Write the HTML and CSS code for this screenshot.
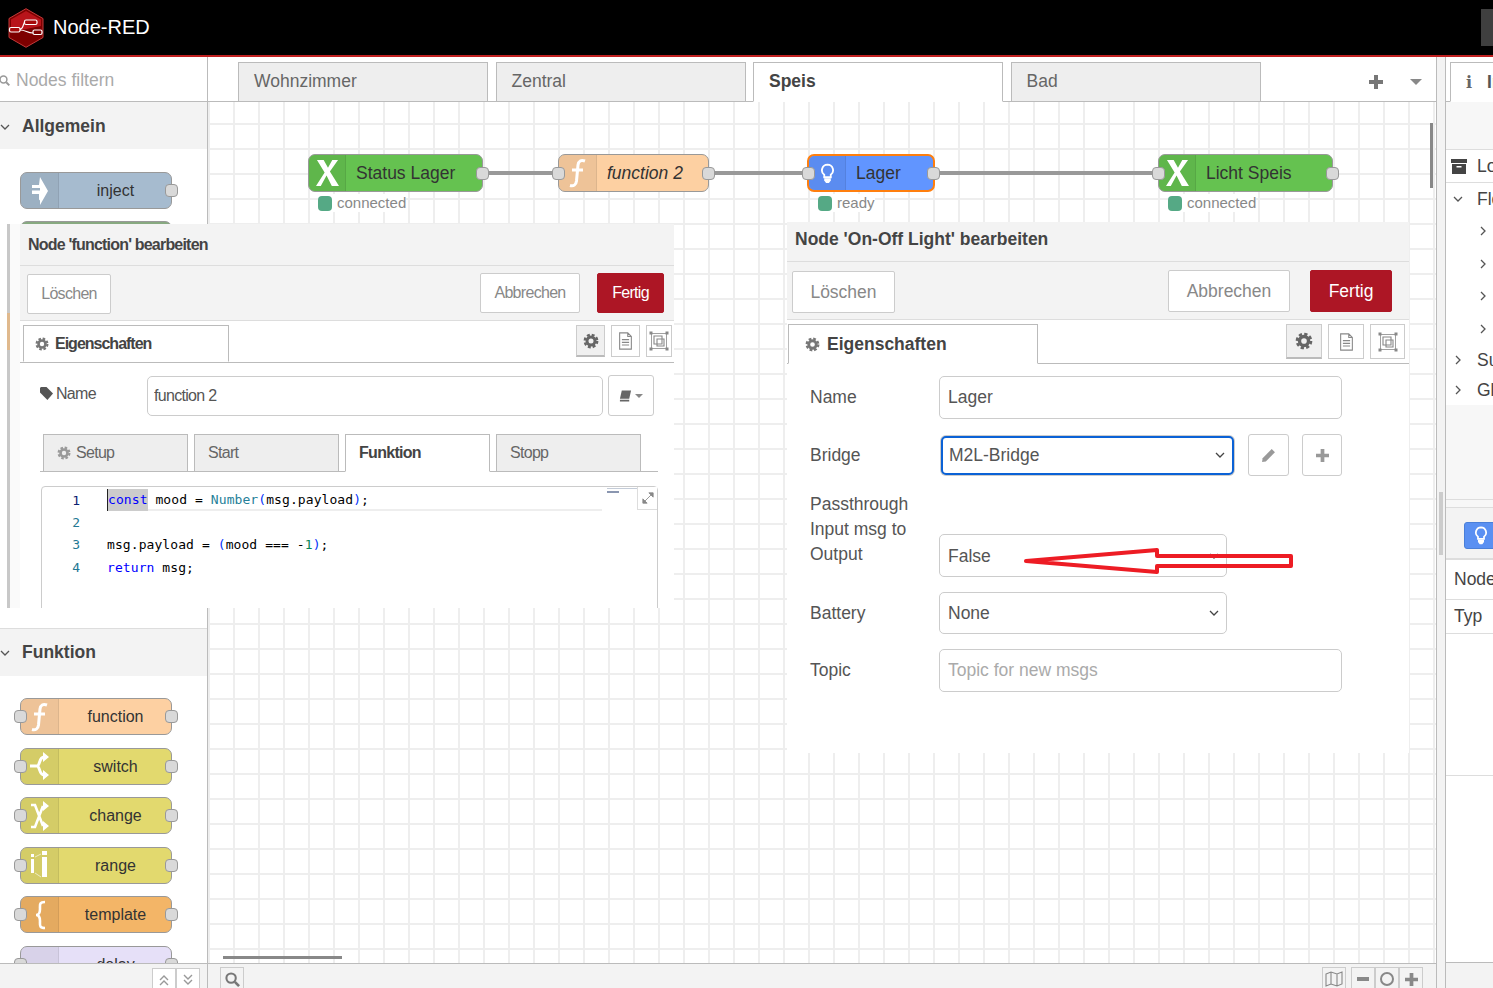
FILE: index.html
```html
<!DOCTYPE html>
<html lang="de">
<head>
    <meta charset="UTF-8">
    <title>Node-RED</title>
    <link rel="stylesheet" href="styles.css">
</head>
<body>
    <!-- shared icons -->
    <svg class="icon-defs" width="0" height="0">
        <defs>
            <symbol id="i-x" viewBox="0 0 24 27"><path d="M1 0h7l4.500 8L17 0h6l-8.500 12L24 27h-7.500L11 16 5 27H0l9-14z" fill="#fff"/></symbol>
            <symbol id="i-func" viewBox="0 0 20 30"><path d="M17 3c-4-1.500-6.500 0-7 4L8.500 23c-.5 4-3 5.500-6.500 4.500M4 12h11" fill="none" stroke="#fff" stroke-width="3"/></symbol>
            <symbol id="i-bulb" viewBox="0 0 16 22"><path d="M8 1.500a6 6 0 0 0-3.500 10.800V15h7v-2.700A6 6 0 0 0 8 1.500z" fill="none" stroke="#fff" stroke-width="2"/><path d="M4.500 16h7v2.500L9.500 21h-3l-2-2.500z" fill="#fff"/></symbol>
            <symbol id="i-inject" viewBox="0 0 20 30"><path d="M10 1l8 14-8 14v-5.500l-1 1V18H2v-3.500h8V12H2V9h7z" fill="#fff"/></symbol>
            <symbol id="i-switch" viewBox="0 0 20 30"><path d="M0 15h7c3 0 2-9 7-9M7 15c3 0 2 9 7 9" fill="none" stroke="#fff" stroke-width="3"/><path d="M13 1l6 5-6 5zM13 19l6 5-6 5z" fill="#fff"/></symbol>
            <symbol id="i-change" viewBox="0 0 20 30"><path d="M1 4h4l8 21M1 26h4l8-21" fill="none" stroke="#fff" stroke-width="2.600"/><path d="M13 0l6 5-6 5zM13 20l6 5-6 5z" fill="#fff"/></symbol>
            <symbol id="i-range" viewBox="0 0 20 30"><path d="M1 9h3v14H1zM12 7h5v20h-5zM12 1h5v4h-5zM1 4h3v3H1z" fill="#fff"/><path d="M5 7l6-3M5 23l6 4" stroke="#fff" stroke-width=".6"/></symbol>
            <symbol id="i-brace" viewBox="0 0 16 30"><path d="M13 2c-6 0-5 3-5 7 0 4-1 6-4 6 3 0 4 2 4 6 0 4-1 7 5 7" fill="none" stroke="#fff" stroke-width="2.600"/></symbol>
            <symbol id="i-gear" viewBox="0 0 16 16"><circle cx="8" cy="8" r="4" fill="none" stroke="currentColor" stroke-width="3"/><circle cx="8" cy="8" r="6.200" fill="none" stroke="currentColor" stroke-width="2.400" stroke-dasharray="2.900 1.970"/></symbol>
            <symbol id="i-doc" viewBox="0 0 16 20"><path d="M1.500 1h9l4 4v14h-13zM10.500 1v4h4M4 8.500h8M4 11.500h8M4 14.500h8" fill="none" stroke="currentColor" stroke-width="1.200"/></symbol>
            <symbol id="i-frame" viewBox="0 0 20 20"><path d="M2.500 2.500h15v15h-15z" fill="none" stroke="currentColor" stroke-width=".8"/><path d="M5 5h8v8H5zM8 8h7v7H8z" fill="none" stroke="currentColor" stroke-width="1.100"/><path d="M.5.5h3v3h-3zM16.500.5h3v3h-3zM.5 16.500h3v3h-3zM16.500 16.500h3v3h-3z" fill="currentColor"/></symbol>
            <symbol id="i-plus" viewBox="0 0 14 14"><path d="M5 0h4v5h5v4H9v5H5V9H0V5h5z" fill="currentColor"/></symbol>
            <symbol id="i-search" viewBox="0 0 16 16"><circle cx="6.500" cy="6.500" r="5" fill="none" stroke="currentColor" stroke-width="2.200"/><path d="M10.500 10.500L15 15" stroke="currentColor" stroke-width="2.800"/></symbol>
            <symbol id="i-down" viewBox="0 0 10 6"><path d="M1 1l4 4 4-4" fill="none" stroke="currentColor" stroke-width="1.300"/></symbol>
            <symbol id="i-right" viewBox="0 0 6 10"><path d="M1 1l4 4-4 4" fill="none" stroke="currentColor" stroke-width="1.300"/></symbol>
            <symbol id="i-dbl-up" viewBox="0 0 12 12"><path d="M2 6l4-4 4 4M2 11l4-4 4 4" fill="none" stroke="currentColor" stroke-width="1.400"/></symbol>
            <symbol id="i-dbl-down" viewBox="0 0 12 12"><path d="M2 1l4 4 4-4M2 6l4 4 4-4" fill="none" stroke="currentColor" stroke-width="1.400"/></symbol>
        </defs>
    </svg>

    <header class="topbar">
        <svg class="logo" viewBox="0 0 36 40" width="36" height="40">
            <path d="M18 .700l17 9.800v19L18 39.300 1 29.500v-19z" fill="#7d0000" stroke="#c43a3a" stroke-width="1"/>
            <path d="M18 3l15 8.600V18L3 24V11.600z" fill="#b8141a"/>
            <path d="M12 21c4 0 3-7 5-7M12 22c6 0 7 3 13 3" fill="none" stroke="#fff" stroke-width="1.200"/>
            <rect x="16.500" y="12" width="12.500" height="4.500" rx="1.500" fill="#a50a0a" stroke="#fff" stroke-width="1.200"/>
            <rect x="1.500" y="19.500" width="10.500" height="4.500" rx="1.500" fill="#a50a0a" stroke="#fff" stroke-width="1.200"/>
            <rect x="25" y="22" width="9" height="4.500" rx="1.500" fill="#7d0000" stroke="#fff" stroke-width="1.200"/>
        </svg>
        <span class="brand">Node-RED</span>
        <div class="deploy-stub"></div>
    </header>

    <div class="main">
        <aside class="palette">
            <div class="filter">
                <svg class="filter-icon"><use href="#i-search"/></svg>
                <span>Nodes filtern</span>
            </div>
            <div class="cat-head cat-head-first">
                <svg class="chev-down"><use href="#i-down"/></svg>Allgemein
            </div>
            <div class="cat-body cat-general">
                <div class="node node-inject">
                    <div class="node-icon"><svg class="ico"><use href="#i-inject"/></svg></div>
                    <span class="node-label">inject</span>
                    <span class="port port-r"></span>
                </div>
                <div class="node node-debug"></div>
            </div>
            <div class="cat-head">
                <svg class="chev-down"><use href="#i-down"/></svg>Funktion
            </div>
            <div class="cat-body cat-func">
                <div class="node node-function">
                    <div class="node-icon"><svg class="ico"><use href="#i-func"/></svg></div>
                    <span class="node-label">function</span>
                    <span class="port port-l"></span><span class="port port-r"></span>
                </div>
                <div class="node node-yellow">
                    <div class="node-icon"><svg class="ico"><use href="#i-switch"/></svg></div>
                    <span class="node-label">switch</span>
                    <span class="port port-l"></span><span class="port port-r"></span>
                </div>
                <div class="node node-yellow">
                    <div class="node-icon"><svg class="ico"><use href="#i-change"/></svg></div>
                    <span class="node-label">change</span>
                    <span class="port port-l"></span><span class="port port-r"></span>
                </div>
                <div class="node node-yellow">
                    <div class="node-icon"><svg class="ico"><use href="#i-range"/></svg></div>
                    <span class="node-label">range</span>
                    <span class="port port-l"></span><span class="port port-r"></span>
                </div>
                <div class="node node-template">
                    <div class="node-icon"><svg class="ico"><use href="#i-brace"/></svg></div>
                    <span class="node-label">template</span>
                    <span class="port port-l"></span><span class="port port-r"></span>
                </div>
                <div class="node node-delay">
                    <div class="node-icon"></div>
                    <span class="node-label">delay</span>
                    <span class="port port-l"></span><span class="port port-r"></span>
                </div>
            </div>
            <div class="palette-foot">
                <span class="foot-btn foot-chev"><svg><use href="#i-dbl-up"/></svg></span>
                <span class="foot-btn foot-chev"><svg><use href="#i-dbl-down"/></svg></span>
            </div>
        </aside>

        <section class="workspace">
            <div class="tabs">
                <div class="tab">Wohnzimmer</div>
                <div class="tab">Zentral</div>
                <div class="tab tab-active">Speis</div>
                <div class="tab">Bad</div>
                <svg class="tabs-plus"><use href="#i-plus"/></svg>
                <span class="tabs-caret"></span>
            </div>
            <div class="canvas">
                <div class="wire wire-a"></div>
                <div class="wire wire-b"></div>
                <div class="wire wire-c"></div>

                <div class="node flow-node node-green n-status">
                    <div class="node-icon"><svg class="ico ico-x"><use href="#i-x"/></svg></div>
                    <span class="node-label">Status Lager</span>
                    <span class="port port-r"></span>
                </div>
                <div class="status s-status"><i></i>connected</div>

                <div class="node flow-node node-function n-func">
                    <div class="node-icon"><svg class="ico"><use href="#i-func"/></svg></div>
                    <span class="node-label label-italic">function 2</span>
                    <span class="port port-l"></span><span class="port port-r"></span>
                </div>

                <div class="node flow-node node-blue n-lager">
                    <div class="node-icon"><svg class="ico ico-bulb"><use href="#i-bulb"/></svg></div>
                    <span class="node-label">Lager</span>
                    <span class="port port-l"></span><span class="port port-r"></span>
                </div>
                <div class="status s-lager"><i></i>ready</div>

                <div class="node flow-node node-green n-licht">
                    <div class="node-icon"><svg class="ico ico-x"><use href="#i-x"/></svg></div>
                    <span class="node-label">Licht Speis</span>
                    <span class="port port-l"></span><span class="port port-r"></span>
                </div>
                <div class="status s-licht"><i></i>connected</div>

                <div class="scroll-v"></div>
                <div class="scroll-h"></div>
            </div>
            <div class="ws-foot">
                <span class="foot-btn btn-search"><svg><use href="#i-search"/></svg></span>
                <div class="zoom-group">
                    <span class="foot-btn btn-map">
                        <svg viewBox="0 0 18 16"><path d="M1 3l5-2 6 2 5-2v12l-5 2-6-2-5 2zM6 1v12M12 3v12" fill="none" stroke="currentColor" stroke-width="1.100"/></svg>
                    </span>
                    <div class="zoom-btns">
                        <span class="foot-btn"><i class="z-minus"></i></span>
                        <span class="foot-btn"><i class="z-circle"></i></span>
                        <span class="foot-btn"><svg class="z-plus"><use href="#i-plus"/></svg></span>
                    </div>
                </div>
            </div>
        </section>

        <div class="separator"><div class="sep-thumb"></div></div>

        <aside class="sidebar">
            <div class="side-tabs">
                <div class="side-tab"><b class="info-i">i</b><span>Info</span></div>
            </div>
            <div class="side-tools"></div>
            <div class="side-row">
                <svg class="archive" viewBox="0 0 16 15"><path d="M0 0h16v4H0zM1 5h14v10H1z" fill="#444"/><path d="M5.500 7h5v1.500h-5z" fill="#fff"/></svg>
                <span>Lokal</span>
            </div>
            <div class="side-tree">
                <div class="tree-row tree-top"><svg class="chev-down"><use href="#i-down"/></svg><span>Flows</span></div>
                <div class="tree-row tree-sub"><svg class="chev-right"><use href="#i-right"/></svg></div>
                <div class="tree-row tree-sub"><svg class="chev-right"><use href="#i-right"/></svg></div>
                <div class="tree-row tree-sub"><svg class="chev-right"><use href="#i-right"/></svg></div>
                <div class="tree-row tree-sub"><svg class="chev-right"><use href="#i-right"/></svg></div>
                <div class="tree-row"><svg class="chev-right"><use href="#i-right"/></svg><span>Subflows</span></div>
                <div class="tree-row"><svg class="chev-right"><use href="#i-right"/></svg><span>Global</span></div>
            </div>
            <div class="side-gutter"></div>
            <div class="side-gutter-2"></div>
            <div class="side-node">
                <span class="side-node-btn"><svg class="ico-bulb-sm"><use href="#i-bulb"/></svg></span>
            </div>
            <div class="side-prop"><span>Node</span></div>
            <div class="side-prop side-prop-2"><span>Typ</span></div>
            <div class="side-blank"></div>
            <div class="side-foot"></div>
        </aside>
    </div>

    <!-- left edit tray -->
    <div class="strip"><div class="strip-node"></div></div>
    <div class="tray tray-left">
        <div class="tray-head">Node 'function' bearbeiten</div>
        <div class="tray-bar">
            <span class="btn">Löschen</span>
            <span class="btn btn-cancel">Abbrechen</span>
            <span class="btn btn-done">Fertig</span>
        </div>
        <div class="tray-tabs">
            <div class="tray-tab"><svg class="gear"><use href="#i-gear"/></svg>Eigenschaften</div>
            <div class="tray-tools">
                <span class="tool tool-on"><svg class="tool-gear"><use href="#i-gear"/></svg></span>
                <span class="tool"><svg class="tool-doc"><use href="#i-doc"/></svg></span>
                <span class="tool"><svg class="tool-frame"><use href="#i-frame"/></svg></span>
            </div>
        </div>
        <div class="left-body">
            <div class="left-name">
                <label class="left-label">
                    <svg class="tag" viewBox="0 0 14 14"><path d="M0 1l1-1h6l7 7-6 7-8-8z" fill="#555"/></svg>Name
                </label>
                <input class="field left-input" type="text" value="function 2">
                <span class="lib-btn">
                    <svg viewBox="0 0 14 12" class="book"><path d="M3 0h10l-2 9H1zM1 10h10v2H1z" fill="#666"/></svg>
                    <i class="caret"></i>
                </span>
            </div>
            <div class="sub-tabs">
                <div class="sub-tab"><svg class="gear gear-light"><use href="#i-gear"/></svg>Setup</div>
                <div class="sub-tab">Start</div>
                <div class="sub-tab sub-tab-on">Funktion</div>
                <div class="sub-tab">Stopp</div>
            </div>
            <div class="code">
                <div class="code-line code-active"><span class="ln ln-on">1</span><code><span class="sel"><span class="kw">const</span></span> mood = <span class="fn">Number</span><span class="br">(</span>msg.payload<span class="br">)</span>;</code></div>
                <div class="code-line"><span class="ln">2</span><code></code></div>
                <div class="code-line"><span class="ln">3</span><code>msg.payload = <span class="br">(</span>mood === -<span class="num">1</span><span class="br">)</span>;</code></div>
                <div class="code-line"><span class="ln">4</span><code><span class="kw">return</span> msg;</code></div>
                <div class="minimap"><i></i><i></i></div>
                <span class="expand">
                    <svg viewBox="0 0 14 14"><path d="M8 1h5v5zM1 8v5h5zM11 3L3 11" fill="#888" stroke="#888"/></svg>
                </span>
            </div>
        </div>
    </div>

    <!-- right edit tray -->
    <div class="tray tray-right">
        <div class="tray-head">Node 'On-Off Light' bearbeiten</div>
        <div class="tray-bar">
            <span class="btn">Löschen</span>
            <span class="btn btn-cancel">Abbrechen</span>
            <span class="btn btn-done">Fertig</span>
        </div>
        <div class="tray-tabs">
            <div class="tray-tab"><svg class="gear"><use href="#i-gear"/></svg>Eigenschaften</div>
            <div class="tray-tools">
                <span class="tool tool-on"><svg class="tool-gear"><use href="#i-gear"/></svg></span>
                <span class="tool"><svg class="tool-doc"><use href="#i-doc"/></svg></span>
                <span class="tool"><svg class="tool-frame"><use href="#i-frame"/></svg></span>
            </div>
        </div>
        <div class="form">
            <div class="form-row">
                <label>Name</label>
                <input class="field field-wide" type="text" value="Lager">
            </div>
            <div class="form-row">
                <label>Bridge</label>
                <select class="field field-bridge"><option>M2L-Bridge</option></select>
                <span class="side-btn side-btn-edit">
                    <svg viewBox="0 0 14 14"><path d="M10 1l3 3-8.500 8.500L1 13l.5-3.500z" fill="#999"/></svg>
                </span>
                <span class="side-btn side-btn-add"><svg><use href="#i-plus"/></svg></span>
            </div>
            <div class="form-row form-row-tall">
                <label>Passthrough Input msg to Output</label>
                <select class="field field-mid field-false"><option>False</option></select>
            </div>
            <div class="form-row">
                <label>Battery</label>
                <select class="field field-mid"><option>None</option></select>
            </div>
            <div class="form-row">
                <label>Topic</label>
                <input class="field field-wide" type="text" placeholder="Topic for new msgs">
            </div>
        </div>
    </div>

    <!-- hand drawn arrow on the screenshot -->
    <svg class="red-arrow" viewBox="0 0 272 28" width="272" height="28">
        <path d="M3 14L134 3v6h134v10H134v6z" fill="none" stroke="#ed1c24" stroke-width="4" stroke-linejoin="round"/>
    </svg>
</body>
</html>
```

FILE: styles.css
```css
* {
    box-sizing: border-box;
}

html, body {
    margin: 0;
    height: 100%;
    overflow: hidden;
}

body {
    display: flex;
    flex-direction: column;
    font-family: "Liberation Sans", Arial, sans-serif;
    font-size: 17.500px;
    color: #555;
    background: #fff;
}

.icon-defs {
    position: absolute;
}

/* top bar */
.topbar {
    height: 57px;
    flex: none;
    display: flex;
    align-items: center;
    padding-left: 8px;
    background: #000;
    border-bottom: 2px solid #c02020;
    position: relative;
}

.logo {
    flex: none;
}

.brand {
    margin-left: 9px;
    font-size: 20px;
    color: #fff;
}

.deploy-stub {
    position: absolute;
    right: 0;
    top: 9px;
    width: 12px;
    height: 37px;
    background: #3f3f3f;
}

.main {
    flex: 1;
    display: flex;
    min-height: 0;
}

/* palette */
.palette {
    width: 208px;
    flex: none;
    display: flex;
    flex-direction: column;
    border-right: 1px solid #bbb;
    overflow: hidden;
}

.filter {
    height: 45px;
    flex: none;
    display: flex;
    align-items: center;
    gap: 6px;
    padding-top: 3px;
    color: #aaa;
    border-bottom: 1px solid #bbb;
}

.filter-icon {
    width: 11px;
    height: 11px;
    margin-left: -1px;
    color: #999;
}

.cat-head {
    height: 47px;
    flex: none;
    display: flex;
    align-items: center;
    font-weight: bold;
    color: #444;
    background: #f3f3f3;
}

.cat-head-first {
    padding-top: 2px;
}

.chev-down {
    width: 10px;
    height: 6px;
    flex: none;
    margin: 0 12px 0 0;
    color: #555;
}

.chev-right {
    width: 6px;
    height: 10px;
    flex: none;
    color: #555;
}

.cat-body {
    flex: none;
    display: flex;
    flex-direction: column;
    align-items: flex-start;
}

.cat-general {
    height: 480px;
    padding: 23px 0 0 20px;
    gap: 12px;
    border-bottom: 1px solid #ddd;
}

.cat-func {
    flex: 1;
    min-height: 0;
    padding: 22px 0 0 20px;
    gap: 12.600px;
}

/* nodes */
.node {
    width: 152px;
    height: 37px;
    flex: none;
    display: flex;
    align-items: stretch;
    position: relative;
    border: 1px solid #999;
    border-radius: 7px;
    font-size: 16px;
    color: #333;
}

.node-icon {
    width: 38px;
    flex: none;
    display: flex;
    align-items: center;
    justify-content: center;
    background: rgba(0, 0, 0, 0.06);
    border-right: 1px solid rgba(0, 0, 0, 0.08);
    border-radius: 6px 0 0 6px;
}

.node-label {
    flex: 1;
    align-self: center;
    text-align: center;
    padding: 1px 0 0 1px;
}

.ico {
    width: 20px;
    height: 30px;
}

.port {
    position: absolute;
    top: 50%;
    width: 13px;
    height: 13px;
    margin-top: -6.500px;
    background: #d9d9d9;
    border: 1px solid #999;
    border-radius: 4px;
}

.port-l {
    left: -7px;
}

.port-r {
    right: -7px;
}

.node-inject { background: #a6bbcf; }
.node-debug { background: #87a980; }
.node-function { background: #fdd0a2; }
.node-yellow { background: #e2d96e; }
.node-template { background: #f3b567; }
.node-delay { background: #e6e0f8; }
.node-green { background: #65c250; }
.node-blue { background: #6195ff; }

/* workspace */
.workspace {
    width: 1229px;
    flex: none;
    display: flex;
    flex-direction: column;
    border-right: 1px solid #bbb;
}

.tabs {
    height: 45px;
    flex: none;
    display: flex;
    align-items: flex-end;
    gap: 7.500px;
    padding-left: 30px;
    border-bottom: 1px solid #bbb;
}

.tab {
    width: 250px;
    height: 40px;
    margin-bottom: -1px;
    padding: 8px 15px 0;
    background: #eee;
    color: #666;
    border: 1px solid #bbb;
}

.tab-active {
    background: #fff;
    color: #444;
    font-weight: bold;
    border-bottom-color: #fff;
}

.tabs-plus {
    width: 14px;
    height: 14px;
    margin: 0 0 12px 101px;
    color: #777;
}

.tabs-caret {
    width: 0;
    height: 0;
    margin: 0 0 16px 19px;
    border-left: 6px solid transparent;
    border-right: 6px solid transparent;
    border-top: 6px solid #888;
}

.canvas {
    flex: 1;
    position: relative;
    overflow: hidden;
    background-color: #fff;
    background-image: linear-gradient(#eee 2px, transparent 2px), linear-gradient(90deg, #eee 2px, transparent 2px);
    background-size: 25px 25px;
    background-position: 25px 21px;
}

/* canvas items, placed by flow coordinates */
.flow-node {
    position: absolute;
    top: 52px;
    height: 38px;
    font-size: 17.500px;
}

.flow-node .node-label {
    text-align: left;
    padding: 0 0 0 10px;
}

.label-italic {
    font-style: italic;
}

.n-status { left: 100px; width: 175px; }
.n-func { left: 350px; width: 151px; }
.n-lager {
    left: 599px;
    width: 128px;
    border: 2px solid #ff7f0e;
}
.n-licht { left: 950px; width: 175px; }

.n-status .node-icon,
.n-licht .node-icon,
.n-lager .node-icon {
    width: 37px;
}

.ico-x {
    width: 23px;
    height: 26px;
}

.ico-bulb {
    width: 15px;
    height: 21px;
}

.wire {
    position: absolute;
    top: 69px;
    height: 4px;
    background: #999;
}

.wire-a { left: 275px; width: 76px; }
.wire-b { left: 500px; width: 100px; }
.wire-c { left: 726px; width: 225px; }

.status {
    position: absolute;
    top: 92px;
    display: flex;
    align-items: center;
    gap: 5px;
    font-size: 15px;
    line-height: 18px;
    color: #888;
    background: #fff;
}

.status i {
    width: 14px;
    height: 15px;
    background: #55a985;
    border-radius: 4px;
}

.s-status { left: 110px; }
.s-lager { left: 610px; }
.s-licht { left: 960px; }

.scroll-v {
    position: absolute;
    right: 3px;
    top: 21px;
    width: 3px;
    height: 65px;
    background: #888;
}

.scroll-h {
    position: absolute;
    left: 15px;
    bottom: 4px;
    width: 119px;
    height: 3px;
    background: #888;
}

.ws-foot {
    height: 25px;
    flex: none;
    display: flex;
    justify-content: space-between;
    padding: 3px 13px 0 12px;
    background: #f3f3f3;
    border-top: 1px solid #bbb;
}

.palette-foot {
    height: 25px;
    flex: none;
    display: flex;
    justify-content: flex-end;
    padding: 4px 7px 0 0;
    background: #f3f3f3;
    border-top: 1px solid #bbb;
    position: relative;
    z-index: 1;
    margin-top: -25px;
}

.foot-btn {
    width: 24px;
    height: 24px;
    display: flex;
    align-items: center;
    justify-content: center;
    color: #888;
    background: #fff;
    border: 1px solid #ccc;
}

.foot-btn svg {
    width: 15px;
    height: 15px;
}

.foot-chev {
    color: #999;
}

.foot-chev svg {
    width: 12px;
    height: 12px;
}

.btn-search {
    color: #777;
    background: #f3f3f3;
}

.btn-map {
    background: #f3f3f3;
}

.btn-map svg {
    width: 18px;
    height: 16px;
}

.zoom-group {
    display: flex;
    gap: 5px;
}

.zoom-btns {
    display: flex;
}

.zoom-btns .foot-btn {
    background: #f3f3f3;
}

.z-minus {
    width: 12px;
    height: 4px;
    background: #888;
}

.z-circle {
    width: 14px;
    height: 14px;
    border: 2px solid #888;
    border-radius: 50%;
}

.foot-btn .z-plus {
    width: 13px;
    height: 13px;
}

/* separator and sidebar */
.separator {
    width: 9px;
    flex: none;
    position: relative;
    background: #f3f3f3;
    border-right: 1px solid #bbb;
}

.sep-thumb {
    position: absolute;
    left: 2px;
    top: 435px;
    width: 4px;
    height: 63px;
    background: #ccc;
}

.sidebar {
    flex: 1;
    min-width: 0;
    display: flex;
    flex-direction: column;
    overflow: hidden;
    color: #444;
    white-space: nowrap;
}

.side-tabs {
    height: 45px;
    flex: none;
    display: flex;
    align-items: flex-end;
    padding-left: 4px;
    border-bottom: 1px solid #bbb;
}

.side-tab {
    width: 120px;
    height: 40px;
    flex: none;
    display: flex;
    align-items: center;
    gap: 15px;
    margin-bottom: -1px;
    padding-left: 15px;
    background: #fff;
    border: 1px solid #bbb;
    border-bottom-color: #fff;
    color: #555;
    font-weight: bold;
}

.info-i {
    font-family: "DejaVu Serif", serif;
    font-size: 16px;
    color: #666;
}

.side-tools {
    height: 48px;
    flex: none;
    background: #f7f7f7;
    border-bottom: 1px solid #ddd;
}

.side-row {
    height: 33px;
    flex: none;
    display: flex;
    align-items: center;
    gap: 10px;
    padding: 1px 0 0 5px;
    border-bottom: 1px solid #ddd;
}

.archive {
    width: 16px;
    height: 15px;
    flex: none;
}

.side-tree {
    height: 222px;
    flex: none;
    display: flex;
    flex-direction: column;
}

.tree-row {
    height: 30px;
    flex: none;
    display: flex;
    align-items: center;
    padding-left: 7px;
}

.tree-top {
    height: 32px;
}

.tree-row .chev-down {
    margin-right: 14px;
}

.tree-row .chev-right {
    margin: 0 16px 0 2px;
}

.tree-sub {
    height: 32.500px;
    padding-left: 32px;
}

.side-gutter {
    height: 95px;
    flex: none;
    background: #f7f7f7;
    border-bottom: 1px solid #ddd;
}

.side-gutter-2 {
    height: 8px;
    flex: none;
    background: #f7f7f7;
    border-bottom: 1px solid #ddd;
}

.side-node {
    height: 52px;
    flex: none;
    padding: 14px 0 0 18px;
    background: #f3f3f3;
    border-bottom: 2px solid #ddd;
}

.side-node-btn {
    width: 60px;
    height: 27px;
    display: flex;
    align-items: center;
    padding-left: 9px;
    background: #5a90f2;
    border: 1px solid #4a7fd8;
    border-radius: 3px;
}

.ico-bulb-sm {
    width: 14px;
    height: 19px;
}

.side-prop {
    height: 40px;
    flex: none;
    display: flex;
    align-items: center;
    padding-left: 8px;
    border-bottom: 1px solid #ddd;
}

.side-prop-2 {
    height: 34px;
}

.side-blank {
    height: 142px;
    flex: none;
    border-bottom: 1px solid #ddd;
}

.side-foot {
    flex: 1;
    position: relative;
}

.side-foot::after {
    content: "";
    position: absolute;
    left: 0;
    right: 0;
    bottom: 0;
    height: 25px;
    background: #f3f3f3;
    border-top: 1px solid #bbb;
}

/* edit trays are pasted over the editor */
.strip {
    position: absolute;
    left: 7px;
    top: 224px;
    width: 13px;
    height: 384px;
    background: #fafafa;
    border-left: 3px solid #c8c8c8;
}

.strip-node {
    width: 3px;
    height: 37px;
    margin: 89px 0 0 -3px;
    background: #e0b98d;
}

.tray {
    position: absolute;
    display: flex;
    flex-direction: column;
    background: #fff;
    overflow: hidden;
}

.tray-head {
    flex: none;
    display: flex;
    align-items: center;
    background: #f3f3f3;
    color: #444;
    font-weight: bold;
    border-bottom: 1px solid #ddd;
}

.tray-bar {
    flex: none;
    display: flex;
    align-items: flex-start;
    background: #f3f3f3;
    border-bottom: 1px solid #ddd;
}

.btn {
    display: flex;
    align-items: center;
    justify-content: center;
    color: #888;
    background: #fff;
    border: 1px solid #ccc;
    border-radius: 2px;
}

.btn-cancel {
    margin-left: auto;
}

.btn-done {
    color: #fff;
    background: #ad1625;
    border-color: #ad1625;
}

.tray-tabs {
    flex: none;
    display: flex;
    align-items: flex-start;
    border-bottom: 1px solid #bbb;
}

.tray-tab {
    display: flex;
    align-items: center;
    margin-bottom: -1px;
    background: #fff;
    color: #444;
    font-weight: bold;
    border: 1px solid #bbb;
    border-bottom-color: #fff;
}

.gear {
    width: 14px;
    height: 14px;
    flex: none;
    color: #777;
}

.gear-light {
    color: #999;
}

.tray-tools {
    margin-left: auto;
    display: flex;
}

.tool {
    display: flex;
    align-items: center;
    justify-content: center;
    color: #888;
    background: #fff;
    border: 1px solid #ccc;
}

.tool-on {
    color: #666;
    background: #f0f0f0;
    border-bottom: 2px solid #bbb;
}

.tool-doc {
    width: 15px;
    height: 18px;
}

.tool-frame {
    width: 20px;
    height: 20px;
}

.field {
    display: block;
    font: inherit;
    color: #555;
    background: #fff;
    border: 1px solid #ccc;
    border-radius: 5px;
    padding: 0 8px;
    outline: none;
}

select.field {
    appearance: none;
    background-image: url("data:image/svg+xml,%3Csvg xmlns='http://www.w3.org/2000/svg' width='10' height='6'%3E%3Cpath d='M1 1l4 4 4-4' fill='none' stroke='%23444' stroke-width='1.300'/%3E%3C/svg%3E");
    background-repeat: no-repeat;
    background-position: right 7px center;
}

.field::placeholder {
    color: #aaa;
}

/* left tray */
.tray-left {
    left: 20px;
    top: 224px;
    width: 654px;
    height: 384px;
    font-size: 16px;
    letter-spacing: -0.700px;
}

.tray-left .tray-head {
    height: 42px;
    padding-left: 8px;
    letter-spacing: -0.800px;
}

.tray-left .tray-bar {
    height: 55px;
    padding: 7px 10px 0 7px;
}

.tray-left .btn {
    height: 40px;
}

.tray-left .btn:first-child {
    width: 84px;
    margin-top: 1px;
}

.tray-left .btn-cancel {
    width: 100px;
}

.tray-left .btn-done {
    width: 67px;
    margin-left: 17px;
}

.tray-left .tray-tabs {
    height: 42px;
    padding: 4px 2px 0 3px;
}

.tray-left .tray-tab {
    width: 206px;
    height: 37px;
    gap: 6px;
    padding-left: 11px;
    letter-spacing: -1px;
}

.tray-left .tray-tools {
    gap: 6px;
}

.tray-left .tool {
    width: 29px;
    height: 32px;
}

.tray-left .tool:last-child {
    width: 26px;
}

.tray-left .tool-gear {
    width: 16px;
    height: 16px;
}

.left-body {
    padding: 12px 16px 0 20px;
}

.left-name {
    display: flex;
    align-items: center;
    padding-right: 4px;
}

.left-label {
    width: 107px;
    display: flex;
    align-items: center;
    gap: 3px;
    flex: none;
    padding-bottom: 4px;
}

.tag {
    width: 13px;
    height: 13px;
}

.left-input {
    width: 456px;
    height: 40px;
    padding: 0 6px;
    letter-spacing: -0.700px;
}

.lib-btn {
    width: 46px;
    height: 41px;
    margin-left: 5px;
    display: flex;
    align-items: center;
    justify-content: center;
    gap: 3px;
    border: 1px solid #ccc;
    border-radius: 3px;
}

.book {
    width: 13px;
    height: 12px;
}

.caret {
    border-left: 4px solid transparent;
    border-right: 4px solid transparent;
    border-top: 4px solid #888;
}

.sub-tabs {
    display: flex;
    align-items: flex-end;
    margin-top: 18px;
    padding-left: 3px;
    gap: 6px;
    height: 38px;
    border-bottom: 1px solid #bbb;
}

.sub-tab {
    width: 145px;
    height: 38px;
    display: flex;
    align-items: center;
    gap: 5px;
    margin-bottom: -1px;
    padding-left: 13px;
    background: #eee;
    color: #666;
    border: 1px solid #bbb;
}

.sub-tab-on {
    background: #fff;
    color: #444;
    font-weight: bold;
    border-bottom-color: #fff;
}

.code {
    position: relative;
    height: 160px;
    margin: 14px 0 0 1px;
    padding-top: 2px;
    border: 1px solid #ccc;
    border-radius: 4px 4px 0 0;
    letter-spacing: 0;
}

.code-line {
    height: 22.400px;
    display: flex;
    align-items: center;
    font-family: "DejaVu Sans Mono", monospace;
    font-size: 13px;
    color: #000;
}

.ln {
    width: 38px;
    flex: none;
    text-align: right;
    color: #237893;
}

.ln-on {
    color: #0b216f;
}

.code-line code {
    margin-left: 27px;
    font-family: inherit;
    letter-spacing: 0.080px;
    white-space: pre;
}

.code-active code {
    width: 495px;
    height: 22.400px;
    line-height: 22px;
    border-bottom: 2px solid #eee;
}

.sel {
    display: inline-block;
    height: 22px;
    background: #ccc;
    border-left: 1px solid #222;
}

.kw { color: #00f; }
.fn { color: #267f99; }
.br { color: #0431fa; }
.num { color: #098658; }

.minimap {
    position: absolute;
    left: 565px;
    top: 1px;
    width: 30px;
}

.minimap i {
    display: block;
    height: 1px;
    margin-bottom: 2px;
    background: #c4ccd8;
}

.minimap i + i {
    width: 12px;
    height: 2px;
    background: #8a96b0;
}

.expand {
    position: absolute;
    right: 0;
    top: 0;
    width: 20px;
    height: 23px;
    display: flex;
    align-items: center;
    justify-content: center;
    background: #fff;
    border-left: 1px solid #ddd;
    border-bottom: 1px solid #ddd;
}

.expand svg {
    width: 12px;
    height: 12px;
}

/* right tray */
.tray-right {
    left: 787px;
    top: 222px;
    width: 622px;
    height: 531px;
}

.tray-right .tray-head {
    height: 40px;
    padding: 0 0 4px 8px;
}

.tray-right .tray-bar {
    height: 58px;
    padding: 8px 17px 0 5px;
}

.tray-right .btn {
    height: 42px;
}

.tray-right .btn:first-child {
    width: 103px;
    margin-top: 1px;
}

.tray-right .btn-cancel {
    width: 122px;
}

.tray-right .btn-done {
    width: 82px;
    margin-left: 20px;
}

.tray-right .tray-tabs {
    height: 44px;
    padding: 4px 4px 0 1px;
}

.tray-right .tray-tab {
    width: 250px;
    height: 40px;
    gap: 7px;
    padding-left: 16px;
}

.tray-right .gear {
    width: 15px;
    height: 15px;
}

.tray-right .tray-tools {
    gap: 6px;
}

.tray-right .tool {
    width: 36px;
    height: 35px;
}

.tray-right .tool:last-child {
    width: 35px;
}

.tray-right .tool-gear {
    width: 18px;
    height: 18px;
}

.form {
    display: flex;
    flex-direction: column;
    gap: 15px;
    padding: 12px 0 0 23px;
}

.form-row {
    display: flex;
    align-items: center;
}

.form-row label {
    width: 129px;
    flex: none;
    line-height: 25px;
}

.form-row-tall {
    align-items: flex-end;
    margin-top: 1px;
}

.form-row-tall label {
    margin-bottom: 10px;
    padding-right: 20px;
}

.field-wide {
    width: 403px;
    height: 43px;
}

.field-mid {
    width: 288px;
    height: 42px;
}

.field-false {
    height: 43px;
}

.field-bridge {
    width: 293px;
    height: 39px;
    margin-left: 2px;
    padding: 0 6px;
    border: 2px solid #0b62d6;
    box-shadow: 0 0 0 1px #ccc;
}

.side-btn {
    width: 41px;
    height: 42px;
    flex: none;
    display: flex;
    align-items: center;
    justify-content: center;
    margin-left: 14px;
    color: #999;
    border: 1px solid #ccc;
    border-radius: 3px;
}

.side-btn svg {
    width: 13px;
    height: 13px;
}

.side-btn-edit svg {
    width: 15px;
    height: 15px;
}

.side-btn-add {
    width: 40px;
    margin-left: 13px;
}

.red-arrow {
    position: absolute;
    left: 1023px;
    top: 547px;
}
```
